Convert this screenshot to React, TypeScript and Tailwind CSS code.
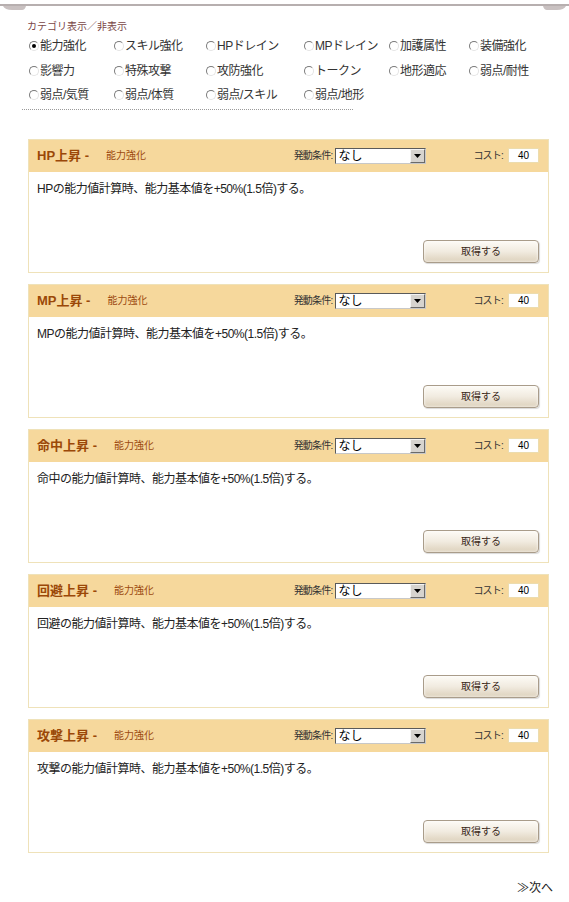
const categories = [
  ["能力強化", "スキル強化", "HPドレイン", "MPドレイン", "加護属性", "装備強化"],
  ["影響力", "特殊攻撃", "攻防強化", "トークン", "地形適応", "弱点/耐性"],
  ["弱点/気質", "弱点/体質", "弱点/スキル", "弱点/地形"],
];

const skills = ["HP", "MP", "命中", "回避", "攻撃"];

function Radio({ checked }: { checked?: boolean }) {
  return (
    <span className="relative inline-flex h-[10px] w-[10px] shrink-0 items-center justify-center rounded-full border border-t-[#7a7a7a] border-l-[#7a7a7a] border-r-[#e4e4e4] border-b-[#e4e4e4] bg-white">
      {checked && <span className="h-[4px] w-[4px] rounded-full bg-black" />}
    </span>
  );
}

function SkillCard({ name }: { name: string }) {
  return (
    <div className="border border-[#efe2b9] bg-white">
      {/* header */}
      <div className="flex h-[32px] items-center bg-[#f6d89c] pl-[8px] pr-[9px]">
        <span className="text-[13px] font-bold text-[#9b4808]">{name}上昇 -</span>
        <span className="ml-[17px] text-[10px] text-[#9c4a10]">能力強化</span>
        <div className="ml-auto flex items-center">
          <span className="text-[10px] tracking-[-0.8px] text-[#333]">発動条件:</span>
          <div className="ml-[3px] flex h-[16px] w-[91px] items-stretch border border-t-[#5a5a5a] border-l-[#5a5a5a] border-r-[#c8c8c8] border-b-[#c8c8c8] bg-white">
            <span className="flex-1 pl-[2px] text-[12px] leading-[14px] text-black">なし</span>
            <span className="flex w-[15px] items-center justify-center border border-t-[#f4f4f4] border-l-[#f4f4f4] border-r-[#6a6a6a] border-b-[#6a6a6a] bg-[#d6d3ce]">
              <svg width="7" height="4" viewBox="0 0 7 4">
                <path d="M0 0h7L3.5 4z" fill="#000" />
              </svg>
            </span>
          </div>
          <span className="ml-[47px] text-[10px] tracking-[-0.8px] text-[#333]">コスト:</span>
          <div className="ml-[5px] flex h-[15px] w-[31px] items-center justify-center border border-[#ecdcae] bg-white text-[10px] text-black">
            40
          </div>
        </div>
      </div>
      {/* body */}
      <div className="flex h-[100px] flex-col justify-between pl-[8px] pr-[9px] pt-[9px] pb-[9px]">
        <p className="text-[12px] leading-[16px] tracking-[-0.5px] text-[#222]">
          {name}の能力値計算時、能力基本値を+50%(1.5倍)する。
        </p>
        <div className="flex justify-end">
          <button className="h-[23px] w-[116px] rounded-[4px] border border-[#a99c8a] bg-gradient-to-b from-[#fdfbf6] via-[#f1ebe0] to-[#ddd1bc] text-[10px] text-[#3a2818] shadow-[inset_0_0_3px_rgba(255,255,255,0.9),1px_1px_1px_rgba(0,0,0,0.15)]">
            取得する
          </button>
        </div>
      </div>
    </div>
  );
}

export default function App() {
  return (
    <main className="w-[569px] min-h-[902px] bg-white font-[family-name:'Liberation_Sans','Noto_Sans_CJK_JP',sans-serif]">
      {/* top rule */}
      <svg width="569" height="12" viewBox="0 0 569 12" className="block">
        <path d="M0 5H569" stroke="#b7afaf" strokeWidth="2" />
        <path d="M3 6Q5 10 12 10H22Q25 10 26 6Z" fill="#c9c1c1" />
        <path d="M566 6Q564 10 557 10H547Q544 10 543 6Z" fill="#c9c1c1" />
      </svg>

      {/* category filter */}
      <section className="pl-[22px] pt-[9px]">
        <div className="pl-[5px] text-[10px] leading-[12px] text-[#7a4646]">カテゴリ表示／非表示</div>
        <div className="mt-[1px] w-[331px] border-b border-dotted border-[#9a9a9a] pb-[1px]">
          {categories.map((row, i) => (
            <div key={i} className="grid h-[24.5px] grid-cols-[85px_92px_98px_85px_80px_80px] items-center pl-[7px]">
              {row.map((c, j) => (
                <label key={c} className="flex items-center whitespace-nowrap text-[12px] tracking-[-0.5px] text-[#333]">
                  <Radio checked={i === 0 && j === 0} />
                  <span className="ml-[1px]">{c}</span>
                </label>
              ))}
            </div>
          ))}
        </div>
      </section>

      {/* skill list */}
      <section className="ml-[28px] mt-[29px] flex w-[521px] flex-col gap-[11px]">
        {skills.map((s) => (
          <SkillCard key={s} name={s} />
        ))}
      </section>

      <div className="mt-[26px] flex justify-end pr-[16px] text-[12px] text-[#222]">≫次へ</div>
    </main>
  );
}
